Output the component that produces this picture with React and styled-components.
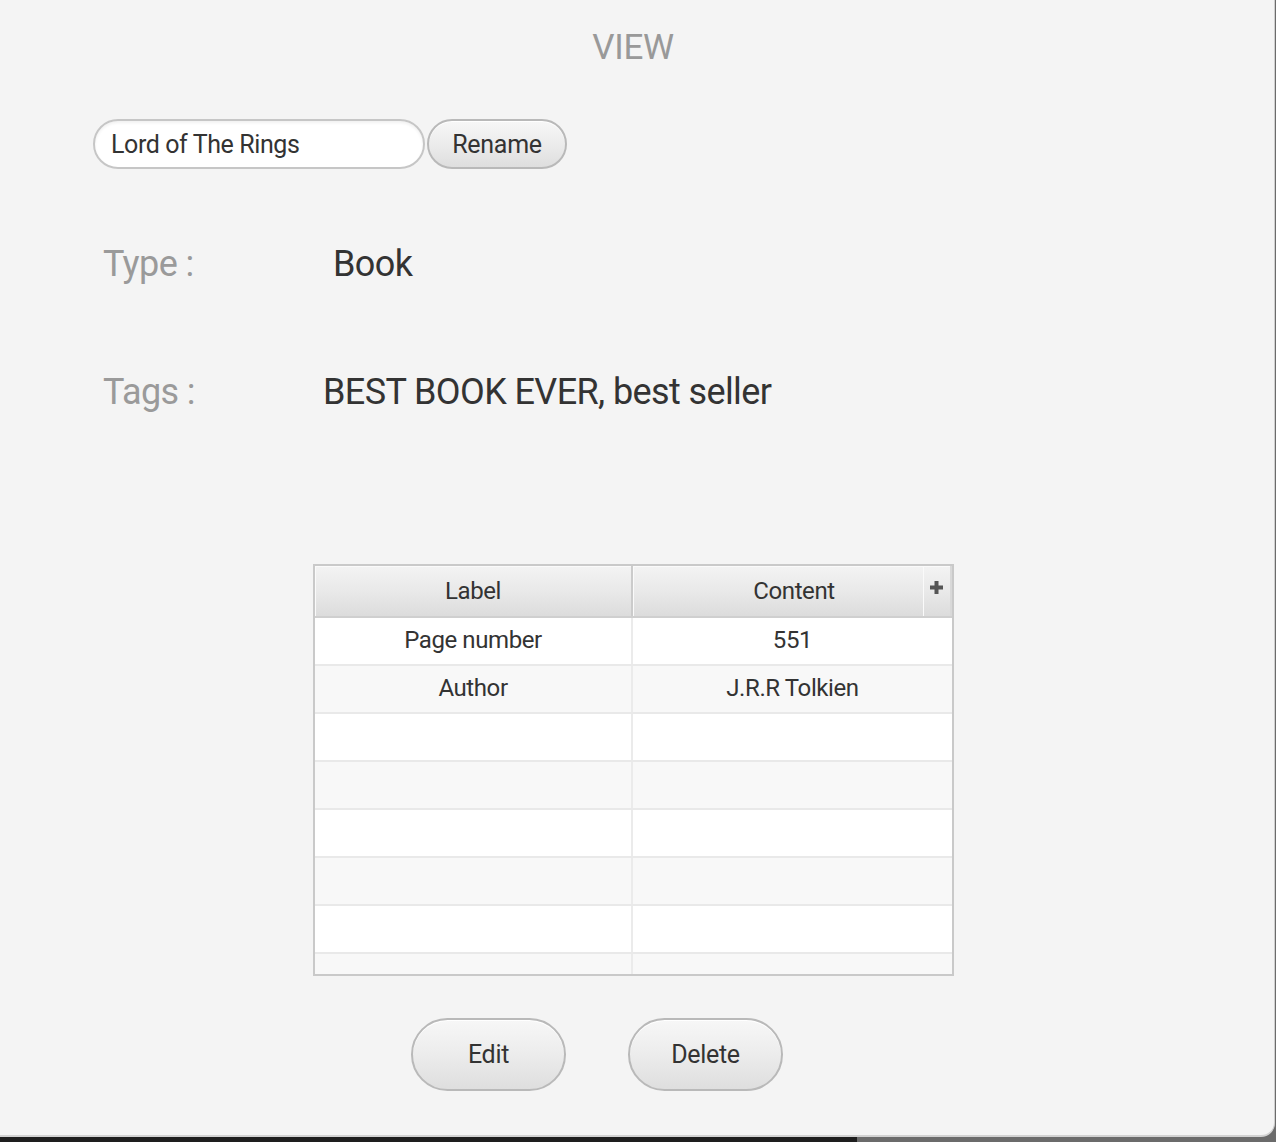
import styled, { createGlobalStyle } from 'styled-components'

const GlobalStyle = createGlobalStyle`
  html, body {
    margin: 0;
    padding: 0;
    background: #1e1e1e;
  }
  body {
    font-family: Roboto, 'Noto Sans', 'Liberation Sans', sans-serif;
  }
`

const Screen = styled.div`
  width: 1276px;
  height: 1142px;
  overflow: hidden;
  background: linear-gradient(to right, #1e1e1e 0 857px, #6b6b6b 857px 100%);
`

const Window = styled.main`
  box-sizing: border-box;
  width: 1275px;
  height: 1137px;
  background: #f4f4f4;
  border-right: 1px solid #cfcfcf;
  border-bottom: 2px solid #d2d2d2;
  border-bottom-right-radius: 14px;
  padding: 28px 0 0 93px;
  display: flex;
  flex-direction: column;
`

const Title = styled.h1`
  margin: 0 0 0 -93px;
  padding-right: 8px;
  font-size: 35px;
  line-height: 40px;
  font-weight: 400;
  color: #999;
  text-align: center;
  letter-spacing: -0.3px;
`

const NameRow = styled.div`
  display: flex;
  align-items: center;
  gap: 2px;
  margin-top: 51px;
`

const NameField = styled.input`
  box-sizing: border-box;
  width: 332px;
  height: 50px;
  padding: 0 0 0 16px;
  border: 2px solid #c6c6c6;
  border-radius: 25px;
  background: #fff;
  box-shadow: inset 0 2px 3px rgba(0, 0, 0, 0.06);
  font-family: inherit;
  font-size: 25px;
  color: #333;
  letter-spacing: -0.4px;
  outline: none;
`

const PillButton = styled.button`
  box-sizing: border-box;
  width: ${(p) => p.$width}px;
  height: ${(p) => p.$height}px;
  border: 2px solid #b9b9b9;
  border-radius: ${(p) => p.$height / 2}px;
  background: linear-gradient(to bottom, #f7f7f7 0%, #ececec 50%, #dedede 100%);
  box-shadow: inset 0 1px 0 #fff;
  font-family: inherit;
  font-size: 25px;
  color: #333;
  letter-spacing: -0.3px;
  padding: 0;
  cursor: pointer;
`

const InfoGrid = styled.div`
  display: grid;
  grid-template-columns: 220px 1fr;
  row-gap: 84px;
  margin-top: 73px;
  padding-left: 10px;
`

const InfoLabel = styled.div`
  font-size: 36px;
  line-height: 44px;
  color: #9a9a9a;
  letter-spacing: -0.6px;
`

const InfoValue = styled.div`
  font-size: 36px;
  line-height: 44px;
  color: #333;
  letter-spacing: -0.6px;
  padding-left: ${(p) => p.$indent || 0}px;
`

const Table = styled.div`
  box-sizing: border-box;
  width: 641px;
  height: 412px;
  margin: 150px 0 0 220px;
  border: 2px solid #c9c9c9;
  background: #fff;
  display: flex;
  flex-direction: column;
  overflow: hidden;
`

const HeaderRow = styled.div`
  display: grid;
  grid-template-columns: 318px 290px 1fr;
  height: 50px;
  flex-shrink: 0;
  border-bottom: 2px solid #cfcfcf;
`

const HeaderCell = styled.div`
  display: flex;
  align-items: center;
  justify-content: center;
  background: linear-gradient(to bottom, #f3f3f3 0%, #e9e9e9 50%, #dcdcdc 100%);
  border-right: ${(p) => (p.$last ? 'none' : '2px solid #cbcbcb')};
  box-shadow: inset 1px 1px 0 #fafafa;
  font-size: 24px;
  color: #333;
  letter-spacing: -0.4px;
  padding-left: ${(p) => p.$shift || 0}px;
`

const PlusCell = styled(HeaderCell)`
  align-items: flex-start;
  padding-top: 15px;
  border-right: 2px solid #d8d8d8;
`

const Body = styled.div`
  flex: 1;
  overflow: hidden;
`

const Row = styled.div`
  display: grid;
  grid-template-columns: 318px 1fr;
  height: 48px;
  box-sizing: border-box;
  border-bottom: 2px solid #e9e9e9;
  background: ${(p) => (p.$odd ? '#f8f8f8' : '#fff')};
`

const Cell = styled.div`
  display: flex;
  align-items: center;
  justify-content: center;
  border-right: ${(p) => (p.$first ? '2px solid #ebebeb' : 'none')};
  font-size: 24px;
  color: #333;
  letter-spacing: -0.4px;
  padding-bottom: 2px;
`

const Actions = styled.div`
  display: flex;
  gap: 62px;
  margin: 42px 0 0 318px;
`

function PlusIcon() {
  return (
    <svg width='13' height='13' viewBox='0 0 13 13'>
      <rect x='4.5' y='0' width='4' height='13' fill='#555' />
      <rect x='0' y='4.5' width='13' height='4' fill='#555' />
    </svg>
  )
}

const rows = [
  ['Page number', '551'],
  ['Author', 'J.R.R Tolkien'],
  ['', ''],
  ['', ''],
  ['', ''],
  ['', ''],
  ['', ''],
  ['', ''],
]

export default function App() {
  return (
    <Screen>
      <GlobalStyle />
      <Window>
        <Title>VIEW</Title>
        <NameRow>
          <NameField defaultValue='Lord of The Rings' />
          <PillButton $width={140} $height={50}>Rename</PillButton>
        </NameRow>
        <InfoGrid>
          <InfoLabel>Type :</InfoLabel>
          <InfoValue $indent={10}>Book</InfoValue>
          <InfoLabel>Tags :</InfoLabel>
          <InfoValue>BEST BOOK EVER, best seller</InfoValue>
        </InfoGrid>
        <Table>
          <HeaderRow>
            <HeaderCell>Label</HeaderCell>
            <HeaderCell $last $shift={32}>Content</HeaderCell>
            <PlusCell $last>
              <PlusIcon />
            </PlusCell>
          </HeaderRow>
          <Body>
            {rows.map(([label, content], i) => (
              <Row key={i} $odd={i % 2 === 1}>
                <Cell $first>{label}</Cell>
                <Cell>{content}</Cell>
              </Row>
            ))}
          </Body>
        </Table>
        <Actions>
          <PillButton $width={155} $height={73}>Edit</PillButton>
          <PillButton $width={155} $height={73}>Delete</PillButton>
        </Actions>
      </Window>
    </Screen>
  )
}
